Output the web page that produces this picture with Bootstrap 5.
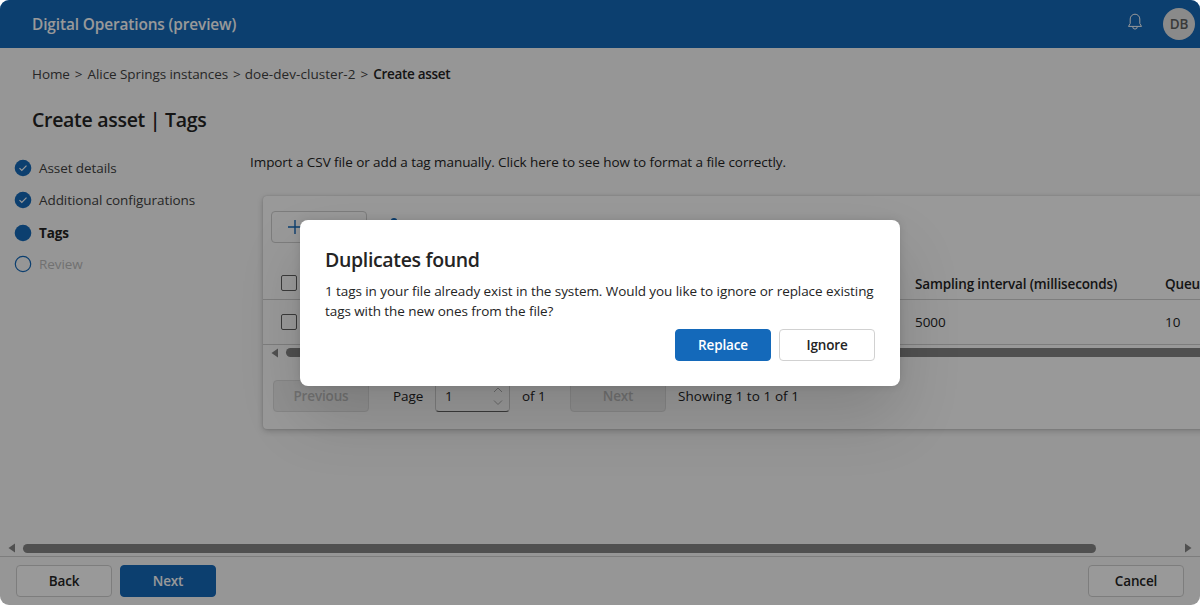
<!DOCTYPE html>
<html lang="en">
<head>
<meta charset="utf-8">
<meta name="viewport" content="width=device-width, initial-scale=1">
<title>Digital Operations (preview)</title>
<link href="https://cdn.jsdelivr.net/npm/bootstrap@5.3.0/dist/css/bootstrap.min.css" rel="stylesheet">
<style>
  :root { --brand: #1469ba; --line: #d1d1d1; }
  body { font: 13.5px/20px "Open Sans", "Noto Sans", sans-serif; letter-spacing: -.075px; color: #242424; background: #fff; }
  .fw-semibold { font-weight: 600 !important; }
  .app-shell { height: 605px; border-radius: 9px; background: #fafafa; }
  .app-header { height: 48px; background: var(--brand); padding: 0 5px 0 32px; }
  .app-title { font-size: 15.4px; letter-spacing: -.12px; padding-top: 2px; }
  .bell { margin-right: 20.500px; margin-bottom: 4px; }
  .avatar-dot { width: 32px; height: 32px; background: #e6e6e6; color: #616161; }
  .trail { padding: 16px 0 0 32px; gap: 5px; color: #424242; }
  .trail b { font-weight: 600; color: #242424; letter-spacing: -.3px; }
  .trail .wide { letter-spacing: .06px; margin-left: -1px; }
  .page-title { font-size: 19.500px; line-height: 28px; font-weight: 600; margin: 22px 0 0 32px; letter-spacing: -.3px; }
  .step-nav { width: 250px; padding: 18px 0 0 14px; color: #424242; }
  .step-row { height: 32px; gap: 7px; }
  .step-row.current { font-weight: 700; color: #242424; padding-top: 1px; }
  .step-row.pending { color: #bdbdbd; }
  .intro { padding-top: 18px; letter-spacing: -.07px; }
  .tag-panel { margin: 24px 0 0 12.5px; width: 1000px; height: 233px; background: #fff; border-radius: 4px; box-shadow: 0 0 2px rgba(0,0,0,.16), 0 2px 6px rgba(0,0,0,.2); }
  .act { width: 96px; height: 32px; padding: 0; font-size: 13.5px; line-height: 20px; font-weight: 600; border-radius: 4px; border: 1px solid var(--line); background: #fff; color: #242424; letter-spacing: -.15px; }
  .act.act-main { background: var(--brand); border-color: var(--brand); color: #fff; }
  .act:disabled { background: #f0f0f0; border-color: #e0e0e0; color: #bdbdbd; opacity: 1; }
  .act.act-icon { text-align: left; padding-left: 16px; line-height: 1; color: var(--brand); }
  .panel-tools { height: 71px; padding: 15px 0 0 8.5px; gap: 20px; }
  .panel-tools .act { flex: none; }
  .grid-row { display: grid; grid-template-columns: 652.5px 250px 1fr; align-items: center; border-bottom: 1px solid var(--line); }
  .grid-head { height: 33px; font-weight: 600; letter-spacing: -.14px; }
  .grid-head span:not(.tick) { padding-top: 2px; }
  .grid-body { height: 45px; }
  .tick { width: 16px; height: 16px; border: 1px solid #616161; border-radius: 2px; margin-left: 18.5px; }
  .hbar { height: 16px; gap: 8px; padding: 0 8px; color: #858585; }
  .hbar.in-panel { padding: 0 0 1px 8px; }
  .thumb { height: 9px; border-radius: 5px; background: #858585; }
  .thumb-main { width: 1073px; }
  .pager { padding: 19px 0 0 10.5px; }
  .pager-label { margin: 0 12px 0 24px; width: 30px; white-space: nowrap; letter-spacing: -.1px; }
  .pager-total { margin: 0 24px 0 12px; width: 24px; white-space: nowrap; }
  .pager-sum { margin-left: 12px; letter-spacing: .08px; }
  .page-box { width: 75px; height: 32px; border: 1px solid var(--line); border-bottom-color: #616161; border-radius: 4px; padding: 0 5px 0 9px; }
  .app-footer { height: 49px; border-top: 1px solid var(--line); padding: 0 16px; gap: 8px; }
  .scrim { inset: 0; background: rgba(0,0,0,.4); }
  .dialog-box { width: 600px; height: 166px; background: #fff; border-radius: 8px; padding: 25px; margin-top: 1px; box-shadow: 0 0 8px rgba(0,0,0,.12), 0 32px 64px rgba(0,0,0,.14); }
  .dialog-title { font-size: 19.500px; line-height: 28px; font-weight: 600; letter-spacing: -.34px; margin: 1px 0 7px; }
</style>
</head>
<body>
<div class="app-shell position-relative overflow-hidden d-flex flex-column">
  <header class="app-header d-flex align-items-center text-white">
    <span class="app-title fw-semibold me-auto">Digital Operations (preview)</span>
    <svg class="bell" width="16" height="18" viewBox="0 0 16 18" fill="none" stroke="#fff" stroke-width="1" stroke-linejoin="round"><path d="M8 1.200a4.800 4.800 0 0 0-4.800 4.800v4.500L1.500 13.400h13L12.800 10.500V6A4.800 4.800 0 0 0 8 1.200zM5.700 13.600a2.300 2.500 0 0 0 4.600 0"/></svg>
    <span class="avatar-dot rounded-circle d-flex align-items-center justify-content-center fw-semibold">DB</span>
  </header>
  <main class="flex-grow-1 d-flex flex-column overflow-hidden">
    <nav class="trail d-flex"><span>Home</span><span>&gt;</span><span>Alice Springs instances</span><span>&gt;</span><span class="wide">doe-dev-cluster-2</span><span>&gt;</span><b>Create asset</b></nav>
    <h1 class="page-title">Create asset | Tags</h1>
    <div class="d-flex flex-grow-1 align-items-start">
      <nav class="step-nav flex-shrink-0">
        <div class="step-row d-flex align-items-center"><svg width="18" height="18" viewBox="0 0 18 18"><circle cx="9" cy="9" r="8.300" fill="#1469ba"/><path d="M5.500 9.200l2.300 2.300 4.700-4.800" fill="none" stroke="#fff" stroke-width="1.200"/></svg><span>Asset details</span></div>
        <div class="step-row d-flex align-items-center"><svg width="18" height="18" viewBox="0 0 18 18"><circle cx="9" cy="9" r="8.300" fill="#1469ba"/><path d="M5.500 9.200l2.300 2.300 4.700-4.800" fill="none" stroke="#fff" stroke-width="1.200"/></svg><span>Additional configurations</span></div>
        <div class="step-row current d-flex align-items-center"><svg width="18" height="18" viewBox="0 0 18 18"><circle cx="9" cy="9" r="8.300" fill="#1469ba"/></svg><span>Tags</span></div>
        <div class="step-row pending d-flex align-items-center"><svg width="18" height="18" viewBox="0 0 18 18"><circle cx="9" cy="9" r="7.700" fill="none" stroke="#1469ba" stroke-width="1.200"/></svg><span>Review</span></div>
      </nav>
      <section class="flex-shrink-0">
        <div class="intro">Import a CSV file or add a tag manually. Click here to see how to format a file correctly.</div>
        <div class="tag-panel">
          <div class="panel-tools d-flex">
            <button class="act act-icon" aria-label="Add"><svg width="14" height="14" viewBox="0 0 14 14" stroke="currentColor" stroke-width="1.400"><path d="M7 0v14M0 7h14"/></svg></button>
            <svg width="14" height="20" viewBox="0 0 14 20" fill="#1469ba"><circle cx="7" cy="10.300" r="3.200"/></svg>
          </div>
          <div class="grid-row grid-head"><span class="tick"></span><span>Sampling interval (milliseconds)</span><span>Queue size</span></div>
          <div class="grid-row grid-body"><span class="tick"></span><span>5000</span><span>10</span></div>
          <div class="hbar in-panel d-flex align-items-center">
            <svg width="7" height="10" viewBox="0 0 7 10"><path d="M7 .500v9L.500 5z" fill="currentColor"/></svg>
            <span class="thumb flex-grow-1"></span>
          </div>
          <div class="pager d-flex align-items-center">
            <button class="act" disabled>Previous</button>
            <span class="pager-label">Page</span>
            <div class="page-box d-flex align-items-center justify-content-between"><span>1</span>
              <svg width="12" height="22" viewBox="0 0 12 22" fill="none" stroke="#b0b0b0"><path d="M2 7l4-4 4 4M2 15.500l4 4 4-4"/></svg></div>
            <span class="pager-total">of 1</span>
            <button class="act" disabled>Next</button>
            <span class="pager-sum">Showing 1 to 1 of 1</span>
          </div>
        </div>
      </section>
    </div>
    <div class="hbar d-flex align-items-center flex-shrink-0">
      <svg width="7" height="10" viewBox="0 0 7 10"><path d="M7 .500v9L.500 5z" fill="currentColor"/></svg>
      <span class="thumb thumb-main"></span>
      <svg class="ms-auto" width="7" height="10" viewBox="0 0 7 10"><path d="M0 .500v9L6.500 5z" fill="currentColor"/></svg>
    </div>
  </main>
  <footer class="app-footer d-flex align-items-center flex-shrink-0">
    <button class="act">Back</button><button class="act act-main">Next</button><button class="act ms-auto">Cancel</button>
  </footer>
  <div class="scrim position-absolute d-flex align-items-center justify-content-center">
    <div class="dialog-box" role="dialog">
      <h2 class="dialog-title">Duplicates found</h2>
      <p class="mb-2">1 tags in your file already exist in the system. Would you like to ignore or replace existing<br>tags with the new ones from the file?</p>
      <div class="d-flex justify-content-end gap-2"><button class="act act-main">Replace</button><button class="act">Ignore</button></div>
    </div>
  </div>
</div>
</body>
</html>
